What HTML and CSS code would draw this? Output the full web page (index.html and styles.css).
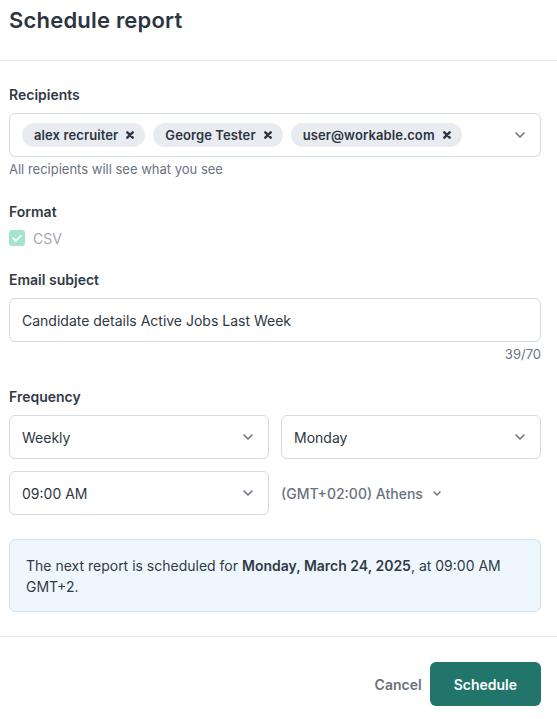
FILE: index.html
```html
<!DOCTYPE html>
<html lang="en">
<head>
<meta charset="utf-8">
<title>Schedule report</title>
<link rel="stylesheet" href="styles.css">
</head>
<body>
<div class="modal">
  <header class="header">
    <h1 class="title">Schedule report</h1>
  </header>
  <main class="content">
    <section class="field">
      <div class="label">Recipients</div>
      <div class="control chips-box">
        <span class="chip">alex recruiter
          <svg class="chip-x" width="8" height="8" viewBox="0 0 8 8"><path d="M1.3 1.3L6.7 6.7M6.7 1.3L1.3 6.7" stroke="#2d3540" stroke-width="2.4" stroke-linecap="round"/></svg>
        </span>
        <span class="chip">George Tester
          <svg class="chip-x" width="8" height="8" viewBox="0 0 8 8"><path d="M1.3 1.3L6.7 6.7M6.7 1.3L1.3 6.7" stroke="#2d3540" stroke-width="2.4" stroke-linecap="round"/></svg>
        </span>
        <span class="chip">user@workable.com
          <svg class="chip-x" width="8" height="8" viewBox="0 0 8 8"><path d="M1.3 1.3L6.7 6.7M6.7 1.3L1.3 6.7" stroke="#2d3540" stroke-width="2.4" stroke-linecap="round"/></svg>
        </span>
        <svg class="chevron push" width="10" height="6" viewBox="0 0 10 6"><path d="M1 1L5 5L9 1" fill="none" stroke="#6b7280" stroke-width="1.6" stroke-linecap="round" stroke-linejoin="round"/></svg>
      </div>
      <div class="hint">All recipients will see what you see</div>
    </section>

    <section class="field">
      <div class="label">Format</div>
      <div class="check-row">
        <svg width="16" height="16" viewBox="0 0 16 16"><rect width="16" height="16" rx="3" fill="#a3e5cc"/><path d="M4 8.2L6.8 11L12 5.5" fill="none" stroke="#fff" stroke-width="1.8" stroke-linecap="round" stroke-linejoin="round"/></svg>
        <span class="check-label">CSV</span>
      </div>
    </section>

    <section class="field">
      <div class="label">Email subject</div>
      <div class="control input">Candidate details Active Jobs Last Week</div>
      <div class="hint counter">39/70</div>
    </section>

    <section class="field">
      <div class="label">Frequency</div>
      <div class="grid">
        <div class="control select"><span>Weekly</span>
          <svg class="chevron" width="10" height="6" viewBox="0 0 10 6"><path d="M1 1L5 5L9 1" fill="none" stroke="#6b7280" stroke-width="1.6" stroke-linecap="round" stroke-linejoin="round"/></svg>
        </div>
        <div class="control select"><span>Monday</span>
          <svg class="chevron" width="10" height="6" viewBox="0 0 10 6"><path d="M1 1L5 5L9 1" fill="none" stroke="#6b7280" stroke-width="1.6" stroke-linecap="round" stroke-linejoin="round"/></svg>
        </div>
        <div class="control select"><span>09:00 AM</span>
          <svg class="chevron" width="10" height="6" viewBox="0 0 10 6"><path d="M1 1L5 5L9 1" fill="none" stroke="#6b7280" stroke-width="1.6" stroke-linecap="round" stroke-linejoin="round"/></svg>
        </div>
        <div class="timezone"><span>(GMT+02:00) Athens</span>
          <svg class="chevron" width="8" height="5" viewBox="0 0 8 5"><path d="M1 1L4 4L7 1" fill="none" stroke="#6b7280" stroke-width="1.5" stroke-linecap="round" stroke-linejoin="round"/></svg>
        </div>
      </div>
    </section>

    <p class="info">The next report is scheduled for <strong>Monday, March 24, 2025</strong>, at 09:00 AM GMT+2.</p>
  </main>
  <footer class="footer">
    <button class="btn-cancel" type="button">Cancel</button>
    <button class="btn-primary" type="button">Schedule</button>
  </footer>
</div>
</body>
</html>
```

FILE: styles.css
```css
* { box-sizing: border-box; }
body {
  margin: 0;
  background: #fff;
  font-family: Inter, "Noto Sans", "Liberation Sans", sans-serif;
  color: #2f3744;
}
.header {
  padding: 6px 16px 26px 9px;
  border-bottom: 1px solid #e6e8eb;
}
.title {
  margin: 0;
  font-size: 22px;
  line-height: 28px;
  font-weight: 600;
  color: #2d3540;
  letter-spacing: 0.2px;
}
.content {
  display: flex;
  flex-direction: column;
  gap: 24px;
  padding: 24px 16px 24px 9px;
}
.field {
  display: flex;
  flex-direction: column;
}
.label {
  font-size: 14px;
  line-height: 20px;
  font-weight: 600;
  color: #323a45;
  margin-bottom: 8px;
}
.control {
  height: 44px;
  border: 1px solid #d5dae2;
  border-radius: 6px;
  background: #fff;
  display: flex;
  align-items: center;
  font-size: 14px;
  color: #2f3744;
}
.chips-box {
  padding: 0 15px 0 12px;
  gap: 8px;
}
.chip {
  height: 24px;
  border-radius: 12px;
  background: #e8ebf0;
  display: inline-flex;
  align-items: center;
  gap: 8px;
  padding: 0 11px 0 12px;
  font-size: 13px;
  font-weight: 600;
  color: #2d3540;
  letter-spacing: 0.1px;
}
.chip-x { display: block; }
.push { margin-left: auto; }
.chevron { display: block; flex-shrink: 0; }
.hint {
  margin-top: 3px;
  font-size: 13px;
  line-height: 18px;
  color: #6b7280;
}
.counter { text-align: right; }
.check-row {
  display: flex;
  align-items: center;
  gap: 8px;
  height: 16px;
}
.check-row svg { display: block; }
.check-label {
  font-size: 14px;
  color: #a3a8b0;
}
.input {
  padding: 0 12px;
}
.grid {
  display: grid;
  grid-template-columns: 1fr 1fr;
  gap: 12px;
}
.select {
  justify-content: space-between;
  padding: 0 15px 0 12px;
}
.timezone {
  display: flex;
  align-items: center;
  gap: 10px;
  font-size: 14px;
  font-weight: 500;
  color: #6b7280;
}
.info {
  margin: 0;
  border: 1px solid #cde4fa;
  background: #eef7fe;
  border-radius: 6px;
  padding: 15px 16px 14px;
  font-size: 14px;
  line-height: 21px;
  color: #323a45;
}
.info strong { font-weight: 600; }
.footer {
  border-top: 1px solid #e6e8eb;
  padding: 25px 16px 13px 9px;
  display: flex;
  justify-content: flex-end;
  align-items: center;
  gap: 8px;
}
.btn-cancel {
  background: none;
  border: 0;
  padding: 0;
  font-family: inherit;
  font-size: 14px;
  font-weight: 600;
  color: #6b7280;
}
.btn-primary {
  height: 44px;
  padding: 0 24px;
  border: 0;
  border-radius: 6px;
  background: #21756a;
  color: #fff;
  font-family: inherit;
  font-size: 14px;
  font-weight: 600;
}
```
